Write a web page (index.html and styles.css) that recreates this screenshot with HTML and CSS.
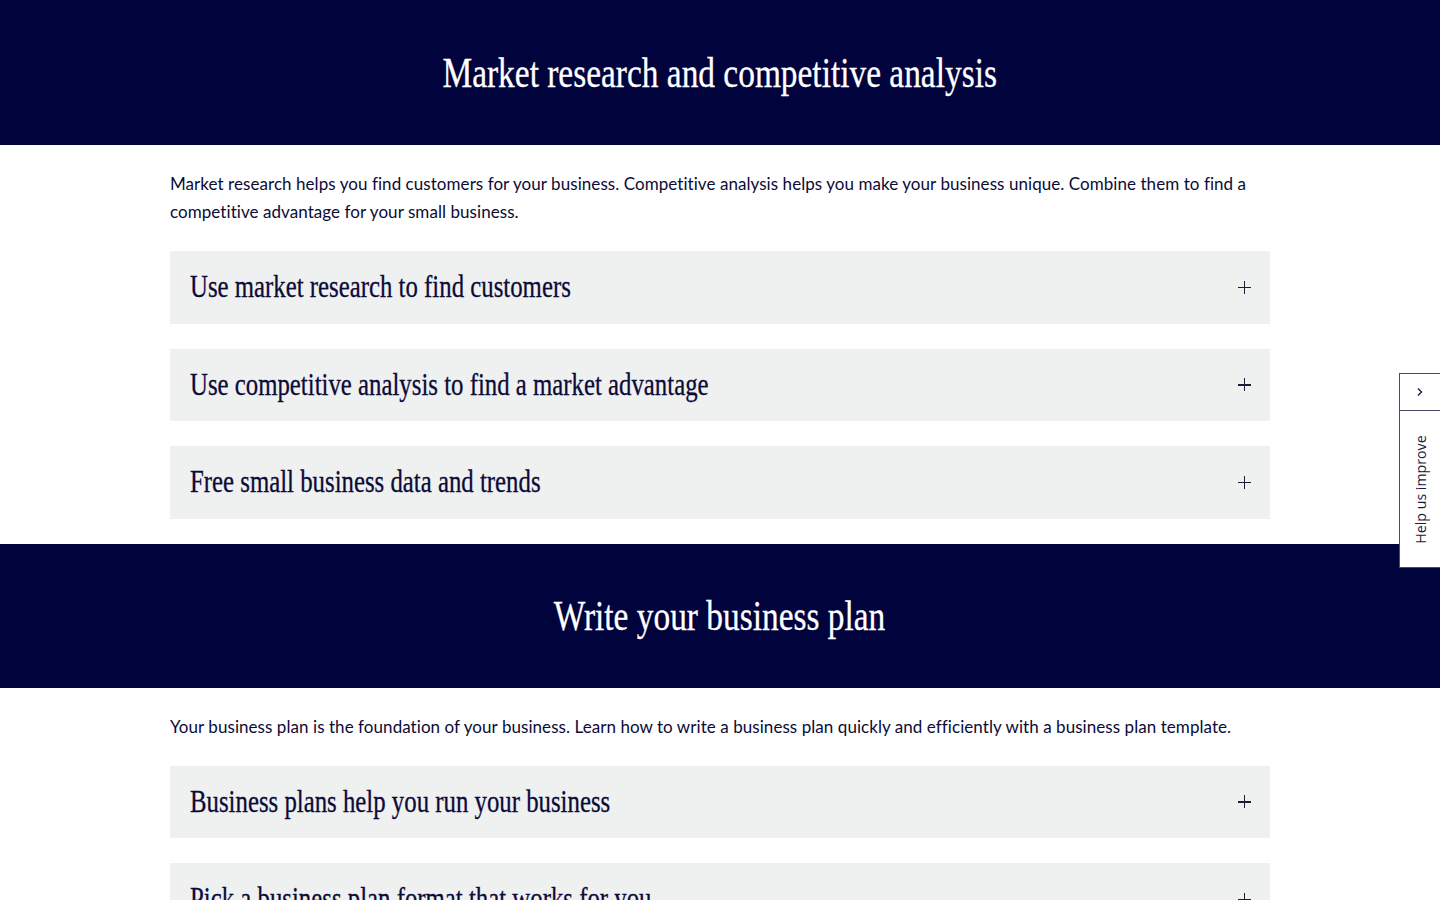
FILE: index.html
```
<!DOCTYPE html>
<html lang="en">
<head>
<meta charset="utf-8">
<title>Market research and competitive analysis</title>
<link rel="stylesheet" href="styles.css">
</head>
<body>
<section class="band band-first">
  <h2 class="band-title"><span class="condensed">Market research and competitive analysis</span></h2>
</section>
<section class="content">
  <p class="intro">Market research helps you find customers for your business. Competitive analysis helps you make your business unique. Combine them to find a competitive advantage for your small business.</p>
  <div class="accordion">
    <button class="acc-item"><span class="acc-title">Use market research to find customers</span><span class="plus"></span></button>
    <button class="acc-item"><span class="acc-title">Use competitive analysis to find a market advantage</span><span class="plus"></span></button>
    <button class="acc-item"><span class="acc-title">Free small business data and trends</span><span class="plus"></span></button>
  </div>
</section>
<section class="band">
  <h2 class="band-title"><span class="condensed">Write your business plan</span></h2>
</section>
<section class="content">
  <p class="intro">Your business plan is the foundation of your business. Learn how to write a business plan quickly and efficiently with a business plan template.</p>
  <div class="accordion">
    <button class="acc-item"><span class="acc-title">Business plans help you run your business</span><span class="plus"></span></button>
    <button class="acc-item"><span class="acc-title">Pick a business plan format that works for you</span><span class="plus"></span></button>
  </div>
</section>
<aside class="feedback">
  <div class="fb-toggle">
    <svg width="10" height="10" viewBox="0 0 10 10"><path d="M3 1.5 L6.5 5 L3 8.5" fill="none" stroke="#1b1b3a" stroke-width="1.4"/></svg>
  </div>
  <div class="fb-label"><span>Help us improve</span></div>
</aside>
</body>
</html>
```
FILE: styles.css
```
* { box-sizing: border-box; }
html, body { margin: 0; padding: 0; }
body {
  background: #ffffff;
  color: #0b0b38;
  font-family: Lato, "Open Sans", sans-serif;
}
.band {
  background: #01033c;
  height: 144px;
  display: flex;
  align-items: center;
  justify-content: center;
}
.band-first { height: 145px; }
.band-title {
  margin: 0;
  color: #ffffff;
  font-family: "Liberation Serif", serif;
  font-weight: 400;
  font-size: 42px;
  line-height: 1;
  text-align: center;
  -webkit-text-stroke: 0.3px #ffffff;
}
.condensed {
  display: inline-block;
  transform: scaleX(0.795);
  transform-origin: center;
  white-space: nowrap;
}
.content {
  width: 1100px;
  margin: 0 auto;
  padding: 25px 0 25px;
}
.intro {
  margin: 0 0 25px;
  font-size: 17px;
  line-height: 28px;
  letter-spacing: 0.06px;
}
.accordion {
  display: flex;
  flex-direction: column;
  gap: 25px;
}
.acc-item {
  display: flex;
  align-items: center;
  justify-content: space-between;
  height: 72.5px;
  padding: 0 19px 0 20px;
  border: 0;
  background: #eff0f0;
  color: #0b0b38;
  text-align: left;
  width: 100%;
}
.acc-title {
  display: inline-block;
  font-family: "Liberation Serif", serif;
  font-size: 31px;
  white-space: nowrap;
  transform: scaleX(0.8);
  transform-origin: left center;
  -webkit-text-stroke: 0.3px #0b0b38;
}
.plus {
  position: relative;
  width: 13px;
  height: 13px;
}
.plus::before, .plus::after {
  content: "";
  position: absolute;
  background: #1b1b3a;
}
.plus::before { left: 0; right: 0; top: 6px; height: 1.4px; }
.plus::after { top: 0; bottom: 0; left: 6px; width: 1.4px; }
.feedback {
  position: fixed;
  right: 0;
  top: 373px;
  width: 41px;
  background: #ffffff;
  border: 1px solid #4a4a66;
  border-right: 0;
}
.fb-toggle {
  height: 37px;
  display: flex;
  align-items: center;
  justify-content: center;
  border-bottom: 1px solid #4a4a66;
}
.fb-label {
  height: 156px;
  display: flex;
  align-items: center;
  justify-content: center;
}
.fb-label span {
  display: inline-block;
  transform: rotate(-90deg);
  white-space: nowrap;
  font-family: "Open Sans", sans-serif;
  font-size: 14.2px;
  color: #1b1b3a;
}
```
